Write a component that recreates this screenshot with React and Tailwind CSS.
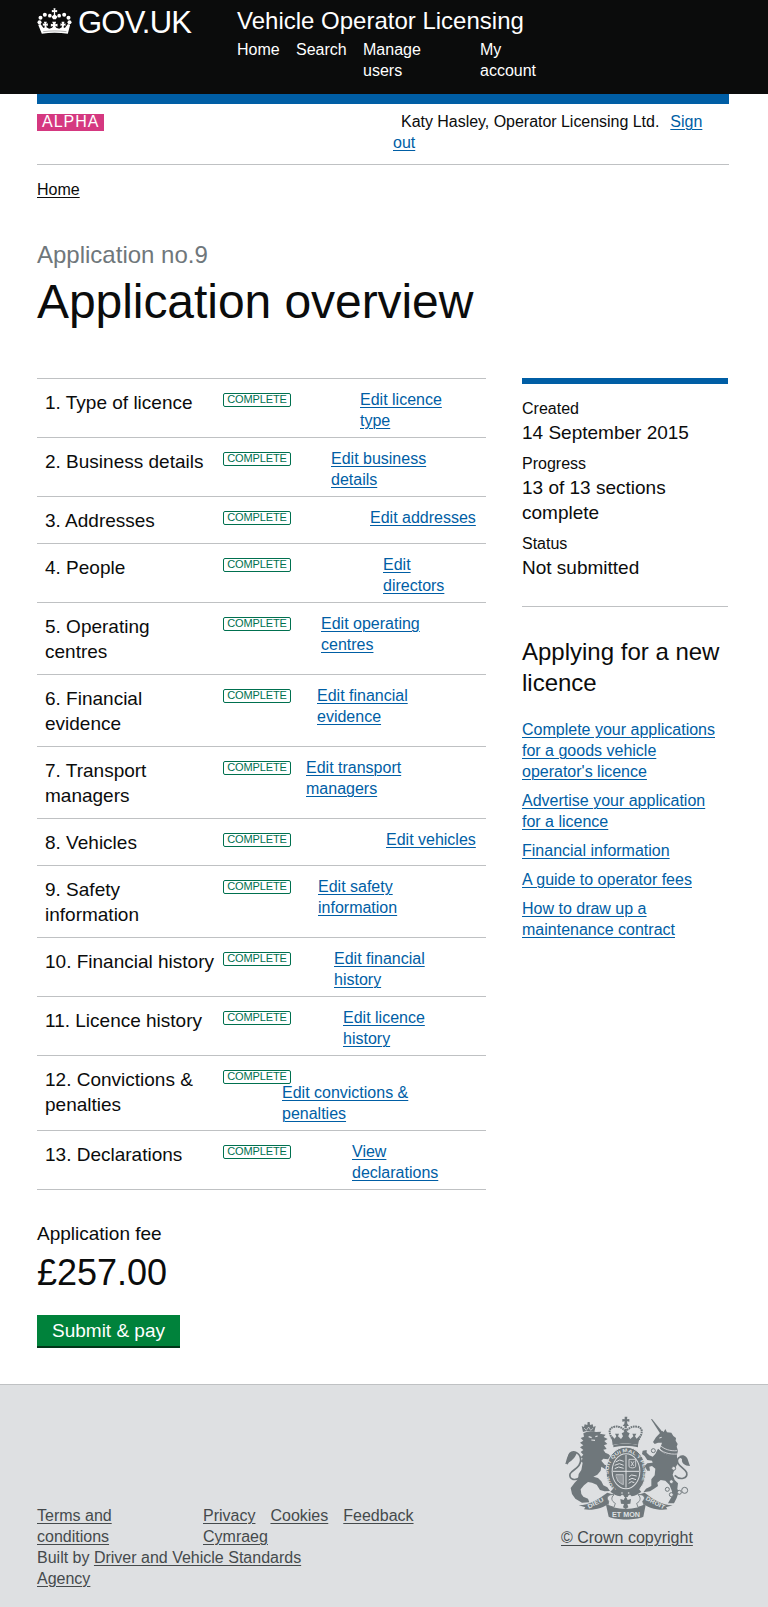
import React from "react";

const rows = [
  { title: ["1. Type of licence"], link: ["Edit licence", "type"], row: "h-[59px]", pos: "ml-[69px]" },
  { title: ["2. Business details"], link: ["Edit business", "details"], row: "h-[59px]", pos: "ml-[40px]" },
  { title: ["3. Addresses"], link: ["Edit addresses"], row: "h-[47px]", pos: "ml-[79px]" },
  { title: ["4. People"], link: ["Edit", "directors"], row: "h-[59px]", pos: "ml-[92px]" },
  { title: ["5. Operating", "centres"], link: ["Edit operating", "centres"], row: "h-[72px]", pos: "ml-[30px]" },
  { title: ["6. Financial", "evidence"], link: ["Edit financial", "evidence"], row: "h-[72px]", pos: "ml-[26px]" },
  { title: ["7. Transport", "managers"], link: ["Edit transport", "managers"], row: "h-[72px]", pos: "ml-[15px]" },
  { title: ["8. Vehicles"], link: ["Edit vehicles"], row: "h-[47px]", pos: "ml-[95px]" },
  { title: ["9. Safety", "information"], link: ["Edit safety", "information"], row: "h-[72px]", pos: "ml-[27px]" },
  { title: ["10. Financial history"], link: ["Edit financial", "history"], row: "h-[59px]", pos: "ml-[43px]" },
  { title: ["11. Licence history"], link: ["Edit licence", "history"], row: "h-[59px]", pos: "ml-[52px]" },
  { title: ["12. Convictions &", "penalties"], link: ["Edit convictions &", "penalties"], row: "h-[75px]", pos: "-ml-[9px] pt-4" },
  { title: ["13. Declarations"], link: ["View", "declarations"], row: "h-[59px]", pos: "ml-[61px]" },
];

function Lines({ items }) {
  return items.map((t, i) => (
    <React.Fragment key={i}>
      {i > 0 && <br />}
      {t}
    </React.Fragment>
  ));
}

function A({ children, className = "text-[#005ea5]" }) {
  return <a href="#" className={"underline underline-offset-2 decoration-1 " + className}>{children}</a>;
}

function Crown() {
  return (
    <svg className="mt-2 h-[26px] w-[35px]" viewBox="111 23 104 78" fill="#fff">
      <path d="M160 24h6l-1 6 6-1v7l-6-1v8l7 6-5 8h-8l-5-8 7-6v-8l-6 1v-7l6 1z" />
      <circle cx="118" cy="66" r="6" />
      <circle cx="121" cy="52" r="6" />
      <circle cx="134" cy="43" r="6" />
      <circle cx="149" cy="46" r="5.5" />
      <circle cx="177" cy="46" r="5.5" />
      <circle cx="192" cy="43" r="6" />
      <circle cx="205" cy="52" r="6" />
      <circle cx="208" cy="66" r="6" />
      <path d="M114 73l7-2 9 12 4-2-2-6-4 2v-8l5 2-2-7h9l-2 7 5-2v8l-4-2 0 6 8 4 9-3 3-6-7 3v-9l7 2-3-8h12l-3 8 7-2v9l-7-3 3 6 9 3 8-4 0-6-4 2v-8l5 2-2-7h9l-2 7 5-2v8l-4-2-2 6 4 2 9-12 7 2-7 27c-26-4-54-4-78 0z" />
      <path d="M129 94c24-3 46-3 70 0" fill="none" stroke="#0b0c0c" strokeWidth="1" />
    </svg>
  );
}

function RoyalArms() {
  return (
    <svg className="h-[104px] w-[125px]" viewBox="75 48 375 312" fill="#6f777b">
      {/* imperial crown */}
      <path d="M254 50h8l-1 8 7-1v8l-7-1 1 7 5 7h-19l5-7 1-7-7 1v-8l7 1z" />
      <path d="M220 122c-14-22-17-38 4-42 15-2 25 4 33 16 8-12 19-18 34-16 20 4 17 20 3 42" fill="none" stroke="#6f777b" strokeWidth="6" strokeDasharray="5 2" />
      <path d="M257 78v40" stroke="#6f777b" strokeWidth="7" strokeDasharray="6 2" />
      <path d="M214 106l10 10 5-7-4-8h12l-3 8 9 8 6-8-4-9 12-6 12 6-4 9 6 8 9-8-3-8h12l-4 8 5 7 10-10-6 29c-22-6-53-6-76 0z" />
      <path d="M220 135c20-5 53-5 74 0v7c-20-5-53-5-74 0z" />
      {/* lion */}
      <path d="M129 96l-4-18 7 3 2-8 8 2 1-9h6l1 9 8-2 2 8 7-3-4 18c-10-4-24-4-34 0z" />
      <path d="M132 84l7 7 7-10 6 10 8-7" fill="none" stroke="#dee0e2" strokeWidth="2" />
      <path d="M130 100C142 93 156 92 168 96L184 95 180 101 197 104 191 111 203 117 193 123 202 132 192 136 200 147 190 149 196 158 206 163 214 172 212 184 204 178 190 176 184 182 194 194 207 198 207 208 196 208 184 200 182 212 172 224 160 230 174 234 184 244 190 256 202 262 210 273 194 274 180 270 170 254 156 248 144 246 132 256 122 268 124 282 130 290 144 296 148 307 126 308 106 296 96 282 92 264 104 248 114 238 116 222 124 210 128 188 122 184 128 176 122 172 130 164 122 156 130 150 120 142 130 136 120 128 130 122 122 114 132 110Z" />
      <path d="M146 110l9 3M166 110l7-2M154 120l11 1" fill="none" stroke="#dee0e2" strokeWidth="3.5" />
      <path d="M122 230C108 244 86 240 90 222 96 208 122 206 122 180 122 158 100 150 90 160 80 170 90 184 80 192" fill="none" stroke="#6f777b" strokeWidth="5" />
      <path d="M76 192c4-10 4-30 22-36l12 4c-4 12-14 24-32 32z" />
      {/* garter and shield */}
      <ellipse cx="258" cy="214" rx="60" ry="73" stroke="#dee0e2" strokeWidth="3" />
      <ellipse cx="258" cy="214" rx="43" ry="54" fill="#dee0e2" />
      <ellipse cx="258" cy="214" rx="40" ry="51" />
      <path d="M258 165v98M219 214h78" stroke="#dee0e2" strokeWidth="3" />
      <path d="M227 186l12-6 12 4M224 196l14-5 13 5M224 206l12-5 15 4M267 230l8-5 15 3M266 240l10-5 12 4M266 250l8-5 9 3" fill="none" stroke="#dee0e2" strokeWidth="3" />
      <path d="M267 178h20v22c-5 5-15 5-20 0zM273 184l8 14M282 184l-9 14" fill="none" stroke="#dee0e2" strokeWidth="2.5" />
      <path d="M228 224c1 15 8 25 22 30V224zM234 224v20M240 224v25M246 224v28" fill="none" stroke="#dee0e2" strokeWidth="2" />
      <path id="motto-arc" d="M228 268C192 234 198 166 258 156c58 10 66 76 30 112" fill="none" />
      <text fill="#dee0e2" fontSize="14" fontWeight="700" fontFamily="Liberation Sans, sans-serif">
        <textPath href="#motto-arc" textLength="258" lengthAdjust="spacingAndGlyphs">HONI SOIT QUI MAL Y PENSE</textPath>
      </text>
      <path d="M221 265c20 18 54 20 74 0l9 11c-9 5-18 12-29 13l-7-7-5 9h-10l-5-9-7 7c-12-1-22-8-30-14z" />
      <circle cx="246" cy="279" r="2.5" fill="#dee0e2" />
      <circle cx="266" cy="279" r="2.5" fill="#dee0e2" />
      {/* unicorn */}
      <path d="M333 58l3-1 32 40-7 4z" />
      <path d="M358 101L366 92 371 96 376 87 381 97 394 98 400 108 408 114 407 122 413 132 410 140 414 152 410 168 388 168 372 160 360 146 366 128 354 128 344 132 339 126 348 112Z" />
      <path d="M354 146L372 160 392 168 410 164 414 190 404 206 398 224 404 240 414 250 412 266 416 276 410 294 402 310 384 310 394 292 396 274 388 254 376 242 362 240 352 248 354 258 342 266 330 274 310 277 318 266 334 258 334 238 344 226 346 206 336 198 328 200 330 212 322 212 314 198 322 190 338 188 336 182 322 180 314 168 306 162 308 152 320 150 320 158 328 166 338 170 346 162Z" />
      <path d="M352 140c14 18 36 24 60 22M358 134c14 14 32 20 54 18" fill="none" stroke="#dee0e2" strokeWidth="2.5" />
      <path d="M358 114l7-2" stroke="#dee0e2" strokeWidth="3" />
      <path d="M404 226C420 242 444 236 440 218 434 204 412 198 412 182 414 166 432 168 440 186" fill="none" stroke="#6f777b" strokeWidth="5" />
      <path d="M418 168c14-6 24 2 27 16l5 14c-16 0-26-8-24-20z" />
      <g fill="#dee0e2" stroke="#6f777b" strokeWidth="3">
        <circle cx="340" cy="152" r="6" />
        <circle cx="401" cy="205" r="6" />
        <circle cx="394" cy="245" r="6" />
        <circle cx="382" cy="268" r="6" />
        <circle cx="394" cy="284" r="6" />
        <circle cx="418" cy="277" r="6" />
        <circle cx="434" cy="271" r="9" />
      </g>
      {/* ribbon */}
      <path d="M116 316C150 314 172 300 202 278L222 284 212 298 210 308C190 324 160 332 132 328L136 322Z" />
      <path d="M398 316C364 314 342 300 314 278L294 284 304 298 306 308C324 324 354 332 382 328L378 322Z" />
      <path d="M206 304C196 292 206 282 222 284 212 292 214 304 226 310L222 322 204 316ZM308 304C320 292 310 282 294 284 304 292 302 304 290 310L294 322 312 316Z" fill="#dee0e2" stroke="#6f777b" strokeWidth="2.5" />
      <path d="M197 310C220 332 294 332 318 310L310 350C286 361 230 361 206 350Z" />
      <path d="M257 288l6 12 10-3-2 14-9 1 3 10-8 5-8-5 3-10-9-1-2-14 10 3z" />
      <g fill="#dee0e2" fontFamily="Liberation Sans, sans-serif" fontWeight="700" fontSize="18">
        <text transform="translate(146 326) rotate(-26)" textLength="52" lengthAdjust="spacingAndGlyphs">DIEU</text>
        <text transform="translate(316 299) rotate(28)" textLength="62" lengthAdjust="spacingAndGlyphs">DROIT</text>
        <text x="216" y="350" fontSize="20" textLength="84" lengthAdjust="spacingAndGlyphs">ET MON</text>
      </g>
    </svg>
  );
}

function Fact({ label, items }) {
  return (
    <div className="mb-[5px]">
      <dt className="text-base leading-[24px]">{label}</dt>
      <dd className="-mt-px mb-[7px] text-[19px] leading-[25px]"><Lines items={items} /></dd>
    </div>
  );
}

export default function App() {
  return (
    <div className="flex h-[1607px] w-[768px] flex-col whitespace-nowrap bg-white font-['Liberation_Sans',Arial,sans-serif] text-base leading-[21px] text-[#0b0c0c]">
      <header className="flex h-[94px] shrink-0 bg-[#0b0c0c] pl-[37px] text-white">
        <div className="flex w-[200px]">
          <Crown />
          <span className="ml-[6px] mt-1 text-[31px] leading-[37px] tracking-[-0.75px]">GOV.UK</span>
        </div>
        <div>
          <div className="mt-1.5 text-2xl leading-[30px]">Vehicle Operator Licensing</div>
          <nav className="mt-[3px] flex">
            <a href="#" className="w-[59px]">Home</a>
            <a href="#" className="w-[67px]">Search</a>
            <a href="#" className="w-[117px]">Manage<br />users</a>
            <a href="#">My<br />account</a>
          </nav>
        </div>
      </header>

      <div className="mx-[37px] mr-[39px] flex h-[71px] shrink-0 items-start justify-between border-b border-t-[10px] border-b-[#bfc1c3] border-t-[#005ea5]">
        <span className="mt-[10px] h-[17px] w-[67px] bg-[#d53880] pl-[5px] leading-[16px] tracking-[1px] text-white">ALPHA</span>
        <p className="mt-[7px] w-[336px]">
          <span className="ml-2 mr-[11px] tracking-[-0.03px]">Katy Hasley, Operator Licensing Ltd.</span>
          <A>Sign<br />out</A>
        </p>
      </div>

      <main className="flex h-[1219px] shrink-0 flex-col pl-[37px]">
        <nav className="mt-[14px]"><A className="text-[#0b0c0c]">Home</A></nav>
        <div className="mt-[40px] text-2xl leading-[30px] text-[#6f777b]">Application no.9</div>
        <h1 className="mt-[7px] text-[48px] leading-[50px] tracking-[-0.06px]">Application overview</h1>
        <div className="mt-[51px] flex">
          <div className="w-[449px]">
            <ul className="border-b border-[#bfc1c3]">
              {rows.map((r) => (
                <li key={r.title[0]} className={"flex items-start border-t border-[#bfc1c3] pl-2 " + r.row}>
                  <div className="mt-[11px] w-[178px] text-[19px] leading-[25px]"><Lines items={r.title} /></div>
                  <span className="mt-[14px] h-[14px] w-[68px] rounded-[2px] border border-[#00704f] text-center text-[11px] leading-[11px] tracking-[-0.1px] text-[#00704f]">COMPLETE</span>
                  <div className={"mt-[10px] " + r.pos}><A><Lines items={r.link} /></A></div>
                </li>
              ))}
            </ul>
            <div className="mt-[31px] text-[19px] leading-[25px]">Application fee</div>
            <div className="mt-[7px] text-4xl leading-[40px]">£257.00</div>
            <button className="mt-[22px] h-[33px] w-[143px] border-b-2 border-[#003618] bg-[#00823b] text-[19px] leading-[31px] text-white">Submit &amp; pay</button>
          </div>
          <aside className="ml-[36px] w-[206px]">
            <dl className="h-[229px] border-b border-t-[6px] border-b-[#bfc1c3] border-t-[#005ea5] pt-[13px]">
              <Fact label="Created" items={["14 September 2015"]} />
              <Fact label="Progress" items={["13 of 13 sections", "complete"]} />
              <Fact label="Status" items={["Not submitted"]} />
            </dl>
            <h2 className="mt-[29px] text-2xl leading-[31px]">Applying for a new<br />licence</h2>
            <ul className="mt-[21px] flex flex-col gap-2">
              <li><A>Complete your applications<br />for a goods vehicle<br />operator's licence</A></li>
              <li><A>Advertise your application<br />for a licence</A></li>
              <li><A>Financial information</A></li>
              <li><A>A guide to operator fees</A></li>
              <li><A>How to draw up a<br />maintenance contract</A></li>
            </ul>
          </aside>
        </div>
      </main>

      <footer className="flex flex-1 border-t border-[#bfc1c3] bg-[#dee0e2] pl-[37px] text-[#454a4c]">
        <div className="mt-[120px] w-[524px]">
          <div className="flex">
            <div className="w-[166px]"><A className="text-[#454a4c]">Terms and<br />conditions</A></div>
            <div>
              <div className="flex gap-[15px]">
                <A className="text-[#454a4c]">Privacy</A>
                <A className="text-[#454a4c]">Cookies</A>
                <A className="text-[#454a4c]">Feedback</A>
              </div>
              <A className="text-[#454a4c]">Cymraeg</A>
            </div>
          </div>
          <div>Built by <A className="text-[#454a4c]">Driver and Vehicle Standards<br />Agency</A></div>
        </div>
        <div className="mt-[31px] flex flex-col">
          <div className="pl-1"><RoyalArms /></div>
          <div className="mt-[7px]"><A className="text-[#454a4c]">© Crown copyright</A></div>
        </div>
      </footer>
    </div>
  );
}
